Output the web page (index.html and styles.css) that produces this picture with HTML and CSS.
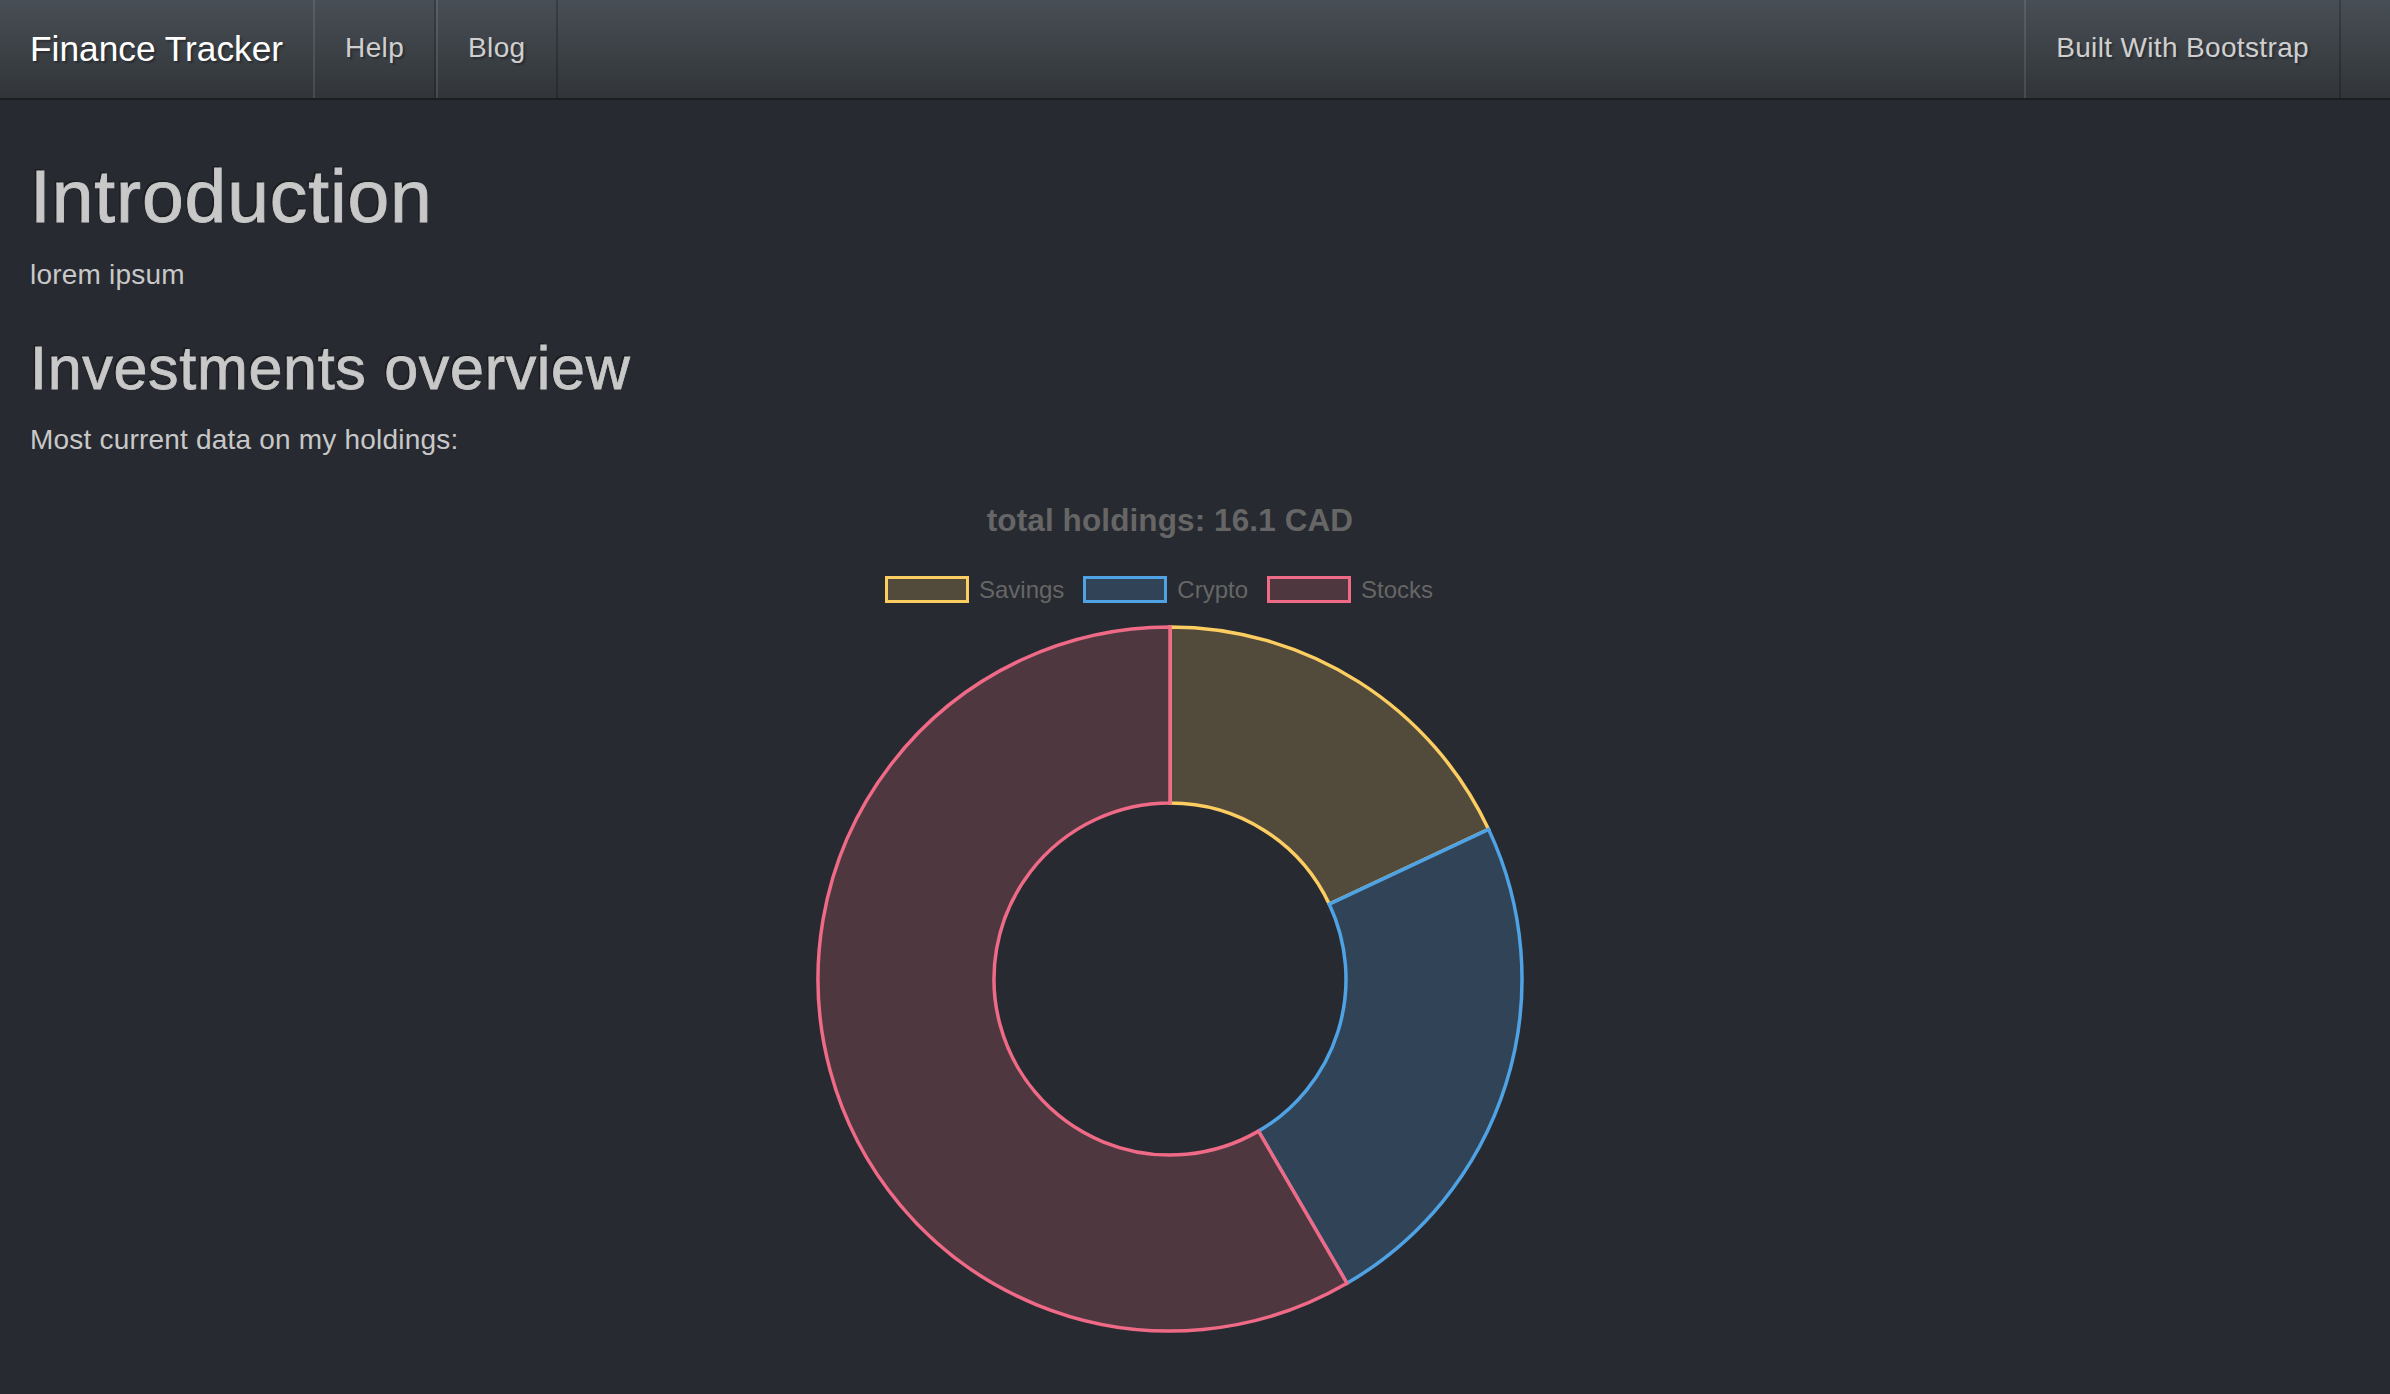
FILE: index.html
```html
<!DOCTYPE html>
<html lang="en">
<head>
<meta charset="utf-8">
<title>Finance Tracker</title>
<link rel="stylesheet" href="styles.css">
</head>
<body>
<nav class="navbar">
  <a class="brand" href="#">Finance Tracker</a>
  <ul class="nav">
    <li><a href="#">Help</a></li>
    <li><a href="#">Blog</a></li>
  </ul>
  <ul class="nav nav-right">
    <li><a href="#">Built With Bootstrap</a></li>
  </ul>
</nav>
<main class="main">
  <h1 class="h-intro">Introduction</h1>
  <p class="text text-intro">lorem ipsum</p>
  <h2 class="h-invest">Investments overview</h2>
  <p class="text">Most current data on my holdings:</p>
  <section class="chart">
    <div class="chart-title">total holdings: 16.1 CAD</div>
    <div class="legend">
      <div class="legend-item"><span class="swatch swatch-savings"></span><span class="legend-label">Savings</span></div>
      <div class="legend-item"><span class="swatch swatch-crypto"></span><span class="legend-label">Crypto</span></div>
      <div class="legend-item"><span class="swatch swatch-stocks"></span><span class="legend-label">Stocks</span></div>
    </div>
    <svg class="doughnut" width="720" height="720" viewBox="0 0 720 720">
      <path class="arc arc-savings" d="M 360 8 A 352 352 0 0 1 678.62 210.38 L 519.31 285.19 A 176 176 0 0 0 360 184 Z"/>
      <path class="arc arc-crypto" d="M 678.62 210.38 A 352 352 0 0 1 536.99 664.27 L 448.49 512.13 A 176 176 0 0 0 519.31 285.19 Z"/>
      <path class="arc arc-stocks" d="M 536.99 664.27 A 352 352 0 1 1 360 8 L 360 184 A 176 176 0 1 0 448.49 512.13 Z"/>
    </svg>
  </section>
</main>
</body>
</html>
```

FILE: styles.css
```css
html, body {
  margin: 0;
  padding: 0;
}
body {
  background: #272a30;
  color: #c8c8c8;
  font-family: "Liberation Sans", Arial, Helvetica, sans-serif;
  font-size: 28px;
  line-height: 40px;
  min-height: 1394px;
}

.navbar {
  display: flex;
  align-items: stretch;
  height: 98px;
  padding-right: 49px;
  background-image: linear-gradient(#484e55, #3a3f44 60%, #313539);
  border-bottom: 2px solid #1c1e22;
  text-shadow: 2px 2px 2px rgba(0, 0, 0, 0.3);
}
.brand {
  display: flex;
  align-items: center;
  padding: 0 30px;
  color: #ffffff;
  font-size: 35.3px;
  text-decoration: none;
}
.nav {
  display: flex;
  margin: 0;
  padding: 0;
  list-style: none;
}
.nav-right {
  margin-left: auto;
}
.nav li {
  display: flex;
}
.nav a {
  display: flex;
  align-items: center;
  padding: 0 30px 3px;
  color: #cfcfcf;
  font-size: 28px;
  letter-spacing: 0.35px;
  text-decoration: none;
  border-left: 2px solid rgba(255, 255, 255, 0.1);
  border-right: 2px solid rgba(0, 0, 0, 0.2);
}

.main {
  padding: 0 80px 0 30px;
}
.h-intro {
  margin: 55px 0 17px;
  font-size: 75px;
  line-height: 82.5px;
  font-weight: 400;
  letter-spacing: 0.9px;
  color: #c8c8c8;
  -webkit-text-stroke: 0.9px #c8c8c8;
  text-shadow: -2px -2px 0 rgba(0, 0, 0, 0.3);
}
.text {
  margin: 0;
  font-size: 28px;
  line-height: 40px;
  letter-spacing: 0.2px;
}
.text-intro {
  margin-bottom: 40px;
}
.h-invest {
  margin: 0 0 18px;
  font-size: 61px;
  line-height: 67px;
  font-weight: 400;
  letter-spacing: 0.7px;
  color: #c8c8c8;
  -webkit-text-stroke: 0.8px #c8c8c8;
  text-shadow: -2px -2px 0 rgba(0, 0, 0, 0.3);
}

.chart {
  display: flex;
  flex-direction: column;
  align-items: center;
  padding-top: 45px;
}
.chart-title {
  font-size: 31.5px;
  line-height: 31px;
  font-weight: 700;
  letter-spacing: 0.1px;
  color: #666666;
}
.legend {
  display: flex;
  justify-content: center;
  margin-top: 40px;
  height: 28px;
  padding-right: 3px;
}
.legend-item {
  display: flex;
  align-items: center;
  margin-right: 19px;
}
.swatch {
  box-sizing: border-box;
  width: 84px;
  height: 27px;
  border: 3px solid;
}
.swatch-savings {
  border-color: #fccd60;
  background: #524b3b;
}
.swatch-crypto {
  border-color: #4fa3e5;
  background: #314356;
}
.swatch-stocks {
  border-color: #ef6a86;
  background: #4f3740;
}
.legend-label {
  margin-left: 10px;
  font-size: 24px;
  line-height: 28px;
  color: #666666;
}
.doughnut {
  display: block;
  margin-top: 15px;
  overflow: visible;
}
.arc {
  stroke-width: 3.5;
  stroke-linejoin: miter;
}
.arc-savings {
  fill: #524b3b;
  stroke: #fccd60;
}
.arc-crypto {
  fill: #314356;
  stroke: #4fa3e5;
}
.arc-stocks {
  fill: #4f3740;
  stroke: #ef6a86;
}
```
